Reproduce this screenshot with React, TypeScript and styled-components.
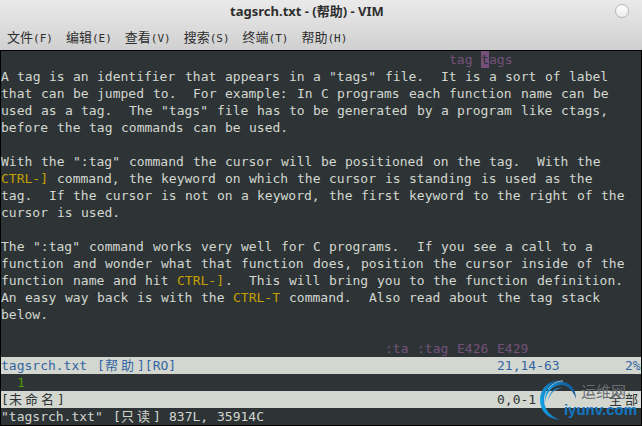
import React from "react";
import styled, { createGlobalStyle } from "styled-components";

const MONO = `"DejaVu Sans Mono", "Noto Sans CJK SC", monospace`;

const GlobalStyle = createGlobalStyle`
  * { box-sizing: border-box; }
  body { margin: 0; background: #000000; }
`;

const Window = styled.main`
  display: flex;
  flex-direction: column;
  min-height: 100vh;
  background: #000000;
`;

const Chrome = styled.header`
  background: linear-gradient(#eaeaea, #d0d0d0);
  color: #2e2e2e;
`;

const TitleBar = styled.div`
  display: grid;
  grid-template-columns: 1fr 24px;
  align-items: center;
  height: 22px;
  padding: 0 13px 0 9px;
`;

const Title = styled.h1`
  margin: 0;
  text-align: center;
  font: bold 13px/22px "Noto Sans", "Noto Sans CJK SC", sans-serif;
  white-space: nowrap;
`;

const WindowButton = styled.button`
  justify-self: end;
  width: 14px;
  height: 14px;
  padding: 0;
  border: 1px solid #b4b4b4;
  border-radius: 50%;
  background: linear-gradient(#ffffff, #ededed);
`;

const MenuBar = styled.nav`
  display: flex;
  gap: 13px;
  height: 28px;
  padding: 2px 7px 0;
`;

const MenuItem = styled.button`
  padding: 0;
  border: 0;
  background: none;
  color: inherit;
  font: 11px/26px ${MONO};
  white-space: nowrap;
`;

const MenuLabel = styled.span`
  font: 13px/26px "Noto Sans CJK SC", sans-serif;
`;

const Terminal = styled.section`
  position: relative;
  flex: 1;
  margin: 1px;
  background: #2e3436;
  color: #d3d7cf;
  font: 13px/17px ${MONO};
  overflow: hidden;
`;

type Tone = "plain" | "tag" | "key" | "line";
const tones: Record<Tone, string> = {
  plain: "inherit",
  tag: "#75507b",
  key: "#c4a000",
  line: "#4e9a06",
};

const Row = styled.div<{ $indent?: number }>`
  height: 17px;
  padding-left: ${(p) => (p.$indent ?? 0) * 8}px;
  white-space: pre;
`;

const Run = styled.span<{ $cells: number; $tone: Tone }>`
  display: inline-block;
  width: ${(p) => p.$cells * 8}px;
  height: 17px;
  text-align: left;
  vertical-align: top;
  color: ${(p) => tones[p.$tone]};
`;

const Cursor = styled(Run)`
  background: #75507b;
  color: #2e3436;
`;

const StatusLine = styled.div<{ $active?: boolean }>`
  display: grid;
  grid-template-columns: 1fr 112px 32px;
  height: 17px;
  background: #d3d7cf;
  color: ${(p) => (p.$active ? "#3465a4" : "#2e3436")};
  white-space: pre;
`;

const Extent = styled.span`
  text-align: right;
`;

const Watermark = styled.div`
  position: absolute;
  right: 4px;
  bottom: 5px;
  display: flex;
  align-items: center;
`;

const WatermarkText = styled.div`
  display: flex;
  flex-direction: column;
  margin-left: -13px;
`;

const WatermarkName = styled.span`
  padding-left: 17px;
  color: #696d72;
  font: 15px/20px "Noto Sans CJK SC", sans-serif;
`;

const WatermarkSite = styled.span`
  color: #1277c4;
  font: bold 15px/18px "Liberation Sans", sans-serif;
`;

/* Sets text on the 8px cell grid: a Latin word takes one cell per letter, an ideograph takes two. */
const Cells = ({ text, tone = "plain" }: { text: string; tone?: Tone }) => (
  <>
    {(text.match(/CTRL-[\]T]|[\u4e00-\u9fff]| +|[^\s\u4e00-\u9fff]+/g) ?? []).map((run, i) => (
      <Run
        key={i}
        $cells={/[\u4e00-\u9fff]/.test(run) ? 2 : run.length}
        $tone={run.startsWith("CTRL-") ? "key" : tone}
      >
        {run}
      </Run>
    ))}
  </>
);

const menus = [
  ["文件", "F"],
  ["编辑", "E"],
  ["查看", "V"],
  ["搜索", "S"],
  ["终端", "T"],
  ["帮助", "H"],
];

const helpText: string[] = [
  `A tag is an identifier that appears in a "tags" file.  It is a sort of label`,
  `that can be jumped to.  For example: In C programs each function name can be`,
  `used as a tag.  The "tags" file has to be generated by a program like ctags,`,
  `before the tag commands can be used.`,
  ``,
  `With the ":tag" command the cursor will be positioned on the tag.  With the`,
  `CTRL-] command, the keyword on which the cursor is standing is used as the`,
  `tag.  If the cursor is not on a keyword, the first keyword to the right of the`,
  `cursor is used.`,
  ``,
  `The ":tag" command works very well for C programs.  If you see a call to a`,
  `function and wonder what that function does, position the cursor inside of the`,
  `function name and hit CTRL-].  This will bring you to the function definition.`,
  `An easy way back is with the CTRL-T command.  Also read about the tag stack`,
  `below.`,
  ``,
];

const Swirl = () => (
  <svg width="37" height="40" viewBox="0 0 37 40" aria-hidden="true">
    <defs>
      <linearGradient id="swirl" x1="0" y1="0.6" x2="1" y2="0.2">
        <stop offset="0" stopColor="#12a4ea" />
        <stop offset="1" stopColor="#12508c" />
      </linearGradient>
    </defs>
    <path d="M20 40C8 39 0 31 0 20C0 9 8 1 19 0C10 4 4 11 4 20C4 29 10 36 20 40Z" fill="url(#swirl)" />
    <path d="M5 23C4 10 12 2 22 2C30 2 36 9 36 19C33 10 28 6 22 5C13 5 6 12 5 23Z" fill="url(#swirl)" />
    <path d="M8 21C9 12 15 7 22 8C14 9 10 14 8 21Z" fill="#2b93d6" />
    <path d="M8 9C12 4 17 1 23 1" fill="none" stroke="#8fd0f2" strokeWidth="1" />
  </svg>
);

export default function App() {
  return (
    <Window>
      <GlobalStyle />
      <Chrome>
        <TitleBar>
          <Title>tagsrch.txt - (帮助) - VIM</Title>
          <WindowButton aria-label="Close" />
        </TitleBar>
        <MenuBar>
          {menus.map(([label, key]) => (
            <MenuItem key={key}>
              <MenuLabel>{label}</MenuLabel>({key})
            </MenuItem>
          ))}
        </MenuBar>
      </Chrome>
      <Terminal>
        <Row $indent={56}>
          <Cells text="tag " tone="tag" />
          <Cursor $cells={1} $tone="plain">
            t
          </Cursor>
          <Cells text="ags" tone="tag" />
        </Row>
        {helpText.map((line, i) => (
          <Row key={i}>
            <Cells text={line} />
          </Row>
        ))}
        <Row $indent={48}>
          <Cells text=":ta :tag E426 E429" tone="tag" />
        </Row>
        <StatusLine $active>
          <span>
            <Cells text="tagsrch.txt [帮助][RO]" />
          </span>
          <span>
            <Cells text="21,14-63" />
          </span>
          <Extent>
            <Cells text="2%" />
          </Extent>
        </StatusLine>
        <Row $indent={2}>
          <Cells text="1" tone="line" />
        </Row>
        <StatusLine>
          <span>
            <Cells text="[未命名]" />
          </span>
          <span>
            <Cells text="0,0-1" />
          </span>
          <Extent>
            <Cells text="全部" />
          </Extent>
        </StatusLine>
        <Row>
          <Cells text={'"tagsrch.txt" [只读] 837L, 35914C'} />
        </Row>
        <Watermark>
          <Swirl />
          <WatermarkText>
            <WatermarkName>运维网</WatermarkName>
            <WatermarkSite>iyunv.com</WatermarkSite>
          </WatermarkText>
        </Watermark>
      </Terminal>
    </Window>
  );
}
